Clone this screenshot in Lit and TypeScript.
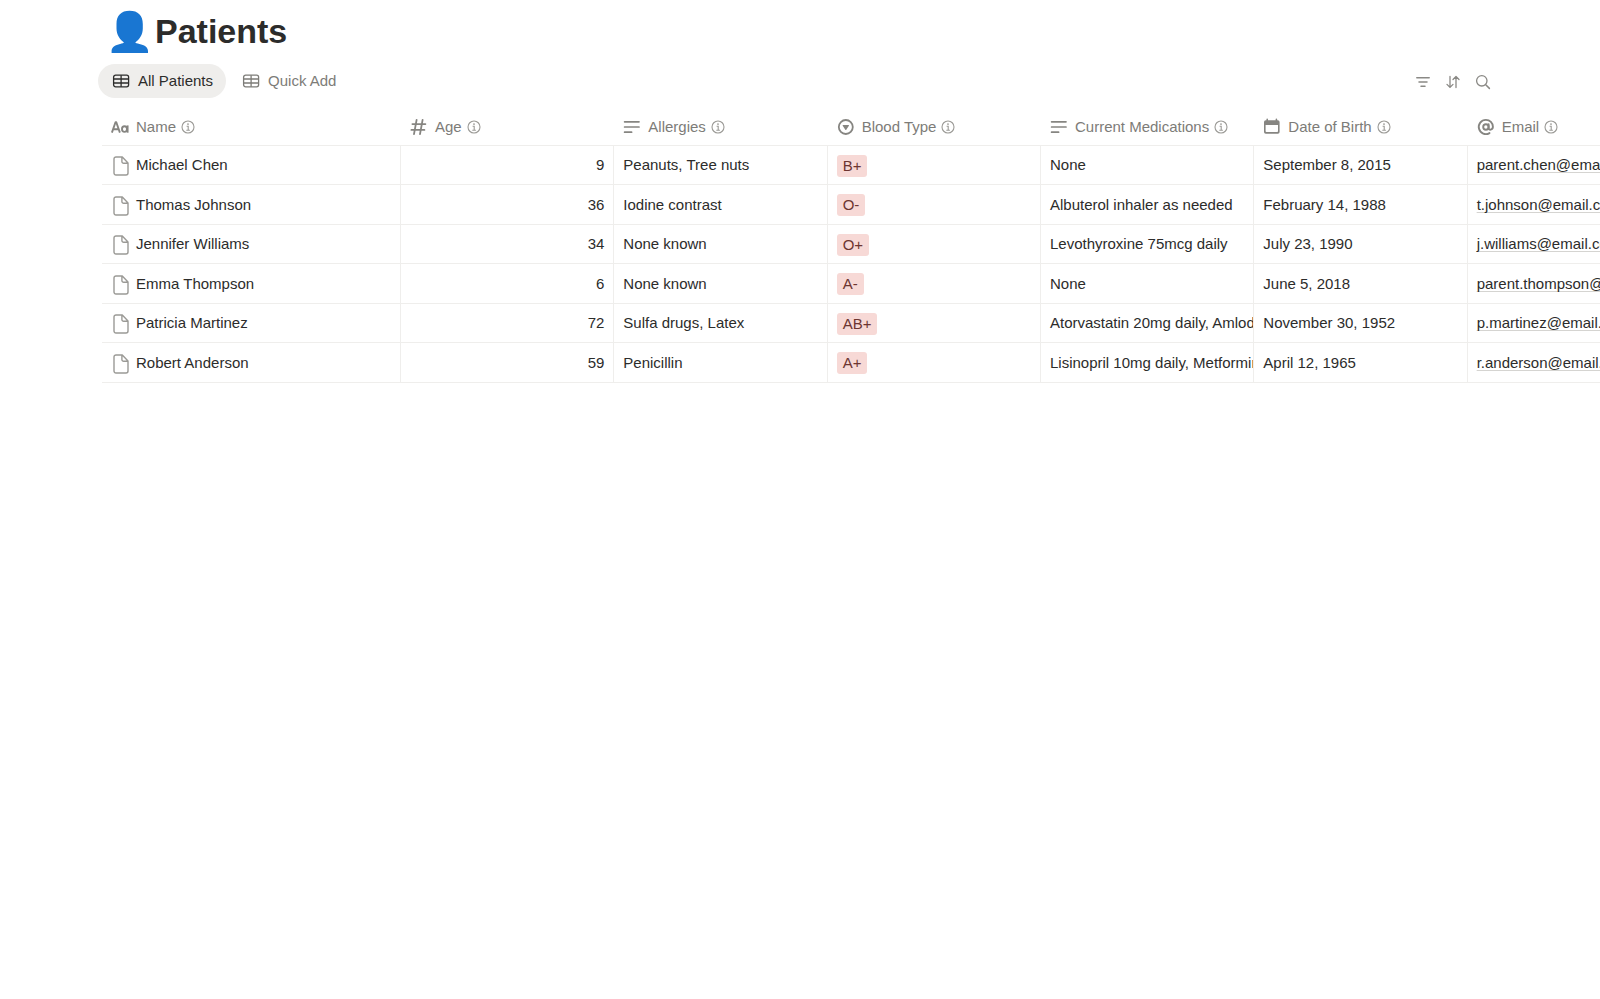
import { LitElement, html, css, svg, type TemplateResult } from "lit";
import { customElement, state } from "lit/decorators.js";

type IconName =
  | "title" | "number" | "lines" | "select" | "calendar" | "at"
  | "info" | "page" | "table" | "filter" | "sort" | "search" | "person";

const ICONS: Record<IconName, { box: string; body: TemplateResult }> = {
  title: {
    box: "0 0 18 18",
    body: svg`<g fill="none" stroke="currentColor" stroke-width="1.9">
      <path d="M.9 14.6 4.500 4.300h.8L8.900 14.600M2.200 11.300h5.400" stroke-linejoin="round"/>
      <ellipse cx="13.500" cy="11.100" rx="2.500" ry="2.800"/><path d="M16.600 7.400v7.300"/></g>`,
  },
  number: {
    box: "0 0 18 18",
    body: svg`<path d="M6.600 1.800 4 16.200M12.600 1.800 10 16.200M2.400 6.100h13M1.400 11.900h13" fill="none" stroke="currentColor" stroke-width="1.800" stroke-linecap="round"/>`,
  },
  lines: {
    box: "0 0 18 18",
    body: svg`<path d="M1.600 3.800h14.400M1.600 9h14.400M1.600 14.200h7" fill="none" stroke="currentColor" stroke-width="1.700" stroke-linecap="round"/>`,
  },
  select: {
    box: "0 0 18 18",
    body: svg`<circle cx="8.800" cy="9" r="7" fill="none" stroke="currentColor" stroke-width="1.800"/>
      <path d="M6.200 6.900h5.200c.5 0 .7.400.5.800l-2.600 4c-.3.400-.7.400-1 0l-2.600-4c-.2-.4 0-.8.5-.8z" fill="currentColor"/>`,
  },
  calendar: {
    box: "0 0 18 18",
    body: svg`<path fill="currentColor" fill-rule="evenodd" d="M4.200.6a.8.8 0 0 1 .8.8v.9h7.600v-.9a.8.8 0 0 1 1.600 0v.9h.6A1.800 1.800 0 0 1 16.600 4.100v9.800a1.800 1.800 0 0 1-1.800 1.800H2.800A1.800 1.800 0 0 1 1 13.900V4.100a1.800 1.800 0 0 1 1.800-1.800h.6v-.9a.8.8 0 0 1 .8-.8zM2.600 7v6.300c0 .5.300.8.800.8h10.800c.5 0 .8-.3.800-.8V7z"/>`,
  },
  at: {
    box: "0 0 18 18",
    body: svg`<g fill="none" stroke="currentColor" stroke-width="1.900" stroke-linecap="round">
      <circle cx="8.900" cy="9" r="2.700"/>
      <path d="M11.600 6.300v3.900c0 2.300 4.300 2 4.300-1.400 0-3.900-3-6.900-7-6.900a7.100 7.100 0 1 0 3.600 13.200"/></g>`,
  },
  info: {
    box: "0 0 14 14",
    body: svg`<circle cx="7" cy="7" r="6" fill="none" stroke="currentColor" stroke-width="1.100"/>
      <circle cx="7" cy="4.100" r=".9" fill="currentColor"/>
      <path d="M5.600 6.300H7.200v3.900M5.300 10.200h3.600" fill="none" stroke="currentColor" stroke-width="1.100"/>`,
  },
  page: {
    box: "0 0 16 20",
    body: svg`<path d="M3 1h6.300L15 6.900V17a2 2 0 0 1-2 2H3a2 2 0 0 1-2-2V3a2 2 0 0 1 2-2zM8.900 1.200V5.500a1.700 1.700 0 0 0 1.700 1.700h4.200" fill="none" stroke="currentColor" stroke-width="1.400" stroke-linejoin="round"/>`,
  },
  table: {
    box: "0 0 18 14",
    body: svg`<g fill="none" stroke="currentColor" stroke-width="1.300"><rect x="1.600" y="1.200" width="15" height="11.600" rx="2"/>
      <path d="M1.600 5h15M1.600 9h15M9.100 1.200v11.600"/></g>`,
  },
  filter: {
    box: "0 0 16 16",
    body: svg`<path d="M1.800 3.800h12.400M4 8h8M6 12.200h4" fill="none" stroke="currentColor" stroke-width="1.500" stroke-linecap="round"/>`,
  },
  sort: {
    box: "0 0 16 16",
    body: svg`<path d="M5 2.400v11M2 10.400l3 3 3-3M11 13.600v-11M8 5.500l3-3 3 3" fill="none" stroke="currentColor" stroke-width="1.300" stroke-linecap="round" stroke-linejoin="round"/>`,
  },
  search: {
    box: "0 0 16 16",
    body: svg`<path d="M11 11l3.400 3.400" fill="none" stroke="currentColor" stroke-width="1.500" stroke-linecap="round"/>
      <circle cx="6.800" cy="6.800" r="5.200" fill="none" stroke="currentColor" stroke-width="1.300"/>`,
  },
  person: {
    box: "0 0 38 44",
    body: svg`<path fill="#1976d2" d="M18.600.8C27 .8 31.800 5.500 31.800 14v4.500C31.800 25 28.300 29.500 24.200 32.600c1.500 1 3.500 1.300 6 1.800 4.500 1 6.800 3.300 6.800 6.900V43H.6v-1.700c0-3.600 2.300-5.900 6.800-6.900 2.500-.5 4.100-.8 5.600-1.800C9 29.500 5.500 25 5.500 18.500V14C5.500 5.500 10.200.8 18.600.8z"/>`,
  },
};

@customElement("ui-icon")
class UiIcon extends LitElement {
  static properties = { name: {} };
  declare name: IconName;

  static styles = css`
    :host { display: inline-flex; flex: none; }
    svg { display: block; width: 100%; height: 100%; }
  `;

  render() {
    const icon = ICONS[this.name];
    return html`<svg viewBox=${icon.box} aria-hidden="true">${icon.body}</svg>`;
  }
}

interface Patient {
  name: string;
  age: number;
  allergies: string;
  blood: string;
  medications: string;
  born: string;
  email: string;
}

const COLUMNS: { label: string; icon: IconName }[] = [
  { label: "Name", icon: "title" },
  { label: "Age", icon: "number" },
  { label: "Allergies", icon: "lines" },
  { label: "Blood Type", icon: "select" },
  { label: "Current Medications", icon: "lines" },
  { label: "Date of Birth", icon: "calendar" },
  { label: "Email", icon: "at" },
];

const PATIENTS: Patient[] = [
  { name: "Michael Chen", age: 9, allergies: "Peanuts, Tree nuts", blood: "B+", medications: "None", born: "September 8, 2015", email: "parent.chen@email.com" },
  { name: "Thomas Johnson", age: 36, allergies: "Iodine contrast", blood: "O-", medications: "Albuterol inhaler as needed", born: "February 14, 1988", email: "t.johnson@email.com" },
  { name: "Jennifer Williams", age: 34, allergies: "None known", blood: "O+", medications: "Levothyroxine 75mcg daily", born: "July 23, 1990", email: "j.williams@email.com" },
  { name: "Emma Thompson", age: 6, allergies: "None known", blood: "A-", medications: "None", born: "June 5, 2018", email: "parent.thompson@email.com" },
  { name: "Patricia Martinez", age: 72, allergies: "Sulfa drugs, Latex", blood: "AB+", medications: "Atorvastatin 20mg daily, Amlodipine", born: "November 30, 1952", email: "p.martinez@email.com" },
  { name: "Robert Anderson", age: 59, allergies: "Penicillin", blood: "A+", medications: "Lisinopril 10mg daily, Metformin", born: "April 12, 1965", email: "r.anderson@email.com" },
];

const VIEWS = ["All Patients", "Quick Add"];

@customElement("app-root")
class AppRoot extends LitElement {
  @state() private view = VIEWS[0];

  static styles = css`
    :host {
      display: block;
      min-height: 100vh;
      overflow: hidden;
      background: #fff;
      color: #2c2c2b;
      font: 15px/22px "Liberation Sans", Arial, sans-serif;
    }
    .heading {
      display: flex;
      align-items: flex-start;
      gap: 6px;
      padding: 10px 102px 0 111px;
    }
    .avatar { width: 38px; height: 44px; }
    h1 { margin: 0; font-size: 34px; line-height: 42px; font-weight: 700; }
    .bar {
      display: flex;
      justify-content: space-between;
      align-items: flex-end;
      padding: 10px 102px 0 98px;
    }
    .tabs { display: flex; gap: 2px; }
    button {
      font: inherit;
      color: #7d7c78;
      background: none;
      border: 0;
      padding: 0;
      cursor: pointer;
    }
    .tab {
      display: flex;
      align-items: center;
      gap: 8px;
      height: 34px;
      padding: 0 13px 0 14px;
      border-radius: 17px;
    }
    .tab.active { background: #efeeec; color: #2c2c2b; }
    .tab ui-icon { width: 18px; height: 14px; }
    .tools { display: flex; }
    .tool {
      display: flex;
      align-items: center;
      justify-content: center;
      width: 30px;
      height: 32px;
      color: #8a8985;
    }
    .tool ui-icon { width: 16px; height: 16px; }
    table {
      width: 1579px;
      margin: 11px 0 0 102px;
      table-layout: fixed;
      border-collapse: separate;
      border-spacing: 0;
    }
    .first { width: 299px; }
    th {
      height: 36px;
      padding: 0 9px;
      border-bottom: 1px solid #efeeec;
      font-weight: 400;
      text-align: left;
      color: #7d7c78;
    }
    .head { display: flex; align-items: center; }
    .kind { width: 18px; height: 18px; margin-right: 7px; color: #868581; }
    .info { width: 14px; height: 14px; margin-left: 5px; color: #9b9a96; }
    td {
      height: 38px;
      padding: 0 9px;
      border-bottom: 1px solid #efeeec;
      border-right: 1px solid #efeeec;
      white-space: nowrap;
      overflow: hidden;
      text-overflow: clip;
    }
    tr:nth-child(even) td { height: 39px; }
    td:last-child { border-right: 0; }
    .number { text-align: right; }
    .person { display: flex; align-items: center; gap: 7px; }
    .person ui-icon { width: 16px; height: 20px; margin-left: 2px; padding-top: 2px; color: #9b9a96; }
    .tag {
      display: inline-block;
      padding: 0 6px;
      border-radius: 3px;
      background: #f7d9d6;
      color: #6d3531;
      vertical-align: middle;
    }
    .mail {
      color: inherit;
      text-decoration: underline 1px #d5d4d1;
      text-underline-offset: 2px;
      text-decoration-skip-ink: none;
    }
  `;

  render() {
    return html`
      <header class="heading">
        <ui-icon class="avatar" name="person"></ui-icon>
        <h1>Patients</h1>
      </header>
      <div class="bar">
        <div class="tabs" role="tablist">
          ${VIEWS.map(
            (v) => html`<button
              class=${v === this.view ? "tab active" : "tab"}
              role="tab"
              aria-selected=${v === this.view}
              @click=${() => (this.view = v)}
            ><ui-icon name="table"></ui-icon>${v}</button>`
          )}
        </div>
        <div class="tools">
          <button class="tool" aria-label="Filter"><ui-icon name="filter"></ui-icon></button>
          <button class="tool" aria-label="Sort"><ui-icon name="sort"></ui-icon></button>
          <button class="tool" aria-label="Search"><ui-icon name="search"></ui-icon></button>
        </div>
      </div>
      <table>
        <colgroup>
          ${COLUMNS.map((_, i) => html`<col class=${i ? "" : "first"} />`)}
        </colgroup>
        <thead>
          <tr>
            ${COLUMNS.map(
              (c) => html`<th scope="col"><div class="head">
                <ui-icon class="kind" name=${c.icon}></ui-icon>${c.label}<ui-icon class="info" name="info"></ui-icon>
              </div></th>`
            )}
          </tr>
        </thead>
        <tbody>
          ${PATIENTS.map(
            (p) => html`<tr>
              <td><div class="person"><ui-icon name="page"></ui-icon>${p.name}</div></td>
              <td class="number">${p.age}</td>
              <td>${p.allergies}</td>
              <td><span class="tag">${p.blood}</span></td>
              <td>${p.medications}</td>
              <td>${p.born}</td>
              <td><a class="mail" href="mailto:${p.email}">${p.email}</a></td>
            </tr>`
          )}
        </tbody>
      </table>
    `;
  }
}
